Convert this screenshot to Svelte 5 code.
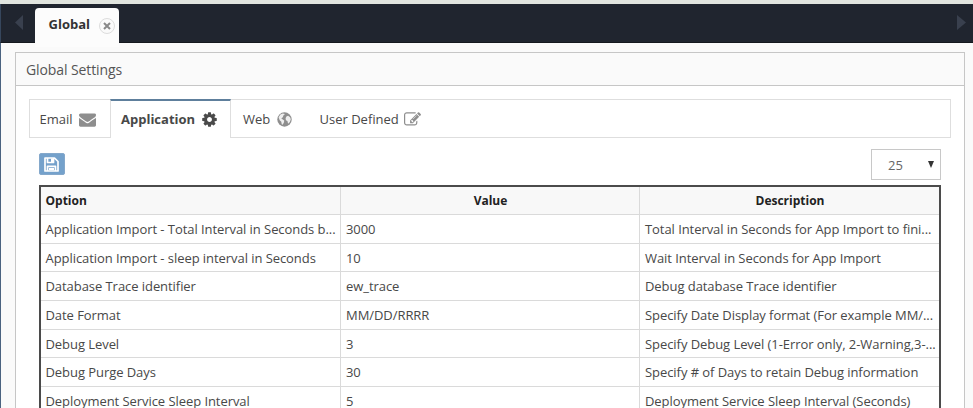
<script>
  const rows = [
    ['Application Import - Total Interval in Seconds b...', '3000', 'Total Interval in Seconds for App Import to fini...'],
    ['Application Import - sleep interval in Seconds', '10', 'Wait Interval in Seconds for App Import'],
    ['Database Trace identifier', 'ew_trace', 'Debug database Trace identifier'],
    ['Date Format', 'MM/DD/RRRR', 'Specify Date Display format (For example MM/...'],
    ['Debug Level', '3', 'Specify Debug Level (1-Error only, 2-Warning,3-...'],
    ['Debug Purge Days', '30', 'Specify # of Days to retain Debug information'],
    ['Deployment Service Sleep Interval', '5', 'Deployment Service Sleep Interval (Seconds)']
  ];
</script>

<div class="page">
  <div class="strip"></div>
  <header>
    <svg class="arrow left" width="8" height="15" viewBox="0 0 8 15"><path d="M8 0v15L0 7.500z" /></svg>
    <div class="doc-tab">
      <span>Global</span>
      <button class="close" aria-label="Close">
        <svg width="8" height="8" viewBox="0 0 8 8"><path d="M1 1l6 6M7 1L1 7" /></svg>
      </button>
    </div>
    <svg class="arrow right" width="9" height="15" viewBox="0 0 9 15"><path d="M0 0v15l9-7.500z" /></svg>
  </header>
  <main>
    <section class="panel">
      <h1>Global Settings</h1>
      <div class="body">
        <nav>
          <div class="tab email"><span>Email</span>
            <svg width="17" height="17" viewBox="0 0 1792 1792"><path d="M1792 710v794q0 66-47 113t-113 47h-1472q-66 0-113-47t-47-113v-794q44 49 101 87 362 246 497 345 57 42 92.500 65.500t94.500 48 110 24.500h2q51 0 110-24.500t94.500-48 92.500-65.500q170-123 498-345 57-39 100-87zm0-294q0 79-49 151t-122 123q-376 261-468 325-10 7-42.500 31t-54 38.500-52 32.500-57.500 27-50 9h-2q-23 0-50-9t-57.500-27-52-32.500-54-38.500-42.500-31q-91-64-262-182.500t-205-142.500q-62-42-117-115.500t-55-136.500q0-78 41.500-130t118.500-52h1472q65 0 112.500 47t47.500 113z" /></svg>
          </div>
          <div class="tab active"><span>Application</span>
            <svg width="17" height="17" viewBox="0 0 1792 1792"><path d="M1152 896q0-106-75-181t-181-75-181 75-75 181 75 181 181 75 181-75 75-181zm512-109v222q0 12-8 23t-20 13l-185 28q-19 54-39 91 35 50 107 138 10 12 10 25t-9 23q-27 37-99 108t-94 71q-12 0-26-9l-138-108q-44 23-91 38-16 136-29 186-7 28-36 28h-222q-14 0-24.500-8.500t-11.500-21.500l-28-184q-49-16-90-37l-141 107q-10 9-25 9-14 0-25-11-126-114-165-168-7-10-7-23 0-12 8-23 15-21 51-66.500t54-70.500q-27-50-41-99l-183-27q-13-2-21-12.500t-8-23.500v-222q0-12 8-23t19-13l186-28q14-46 39-92-40-57-107-138-10-12-10-24 0-10 9-23 26-36 98.500-107.500t94.500-71.500q13 0 26 10l138 107q44-23 91-38 16-136 29-186 7-28 36-28h222q14 0 24.500 8.500t11.500 21.500l28 184q49 16 90 37l142-107q9-9 24-9 13 0 25 10 129 119 165 170 7 8 7 22 0 12-8 23-15 21-51 66.500t-54 70.500q26 50 41 98l183 28q13 2 21 12.500t8 23.500z" /></svg>
          </div>
          <div class="tab web"><span>Web</span>
            <svg width="15" height="15" viewBox="0 0 15 15"><circle cx="7.500" cy="7.500" r="7.200" /><path class="land" d="M1.600 5.200L3.400 2.600 5.800 1.500 8 2.100 6.400 3.400 5.800 5.300 4.300 6.400 5.800 7.400 7.200 8.400 7 10.200 5.700 12.800 4.700 12.200 4.300 9.800 2.700 8.200zM9.400 4.600l1.700-.8 2 1.400.7 2-.9 2.800-1.800 1.700-.7-2.800-1.500-.7-.3-2z" /></svg>
          </div>
          <div class="tab user"><span>User Defined</span>
            <svg width="17" height="17" viewBox="0 0 1792 1792"><path d="M888 1184l116-116-152-152-116 116v56h96v96h56zm440-720q-16-16-33 1l-350 350q-17 17-1 33t33-1l350-350q17-17 1-33zm80 594v190q0 119-84.500 203.500t-203.500 84.500h-832q-119 0-203.500-84.500t-84.500-203.500v-832q0-119 84.500-203.500t203.500-84.500h832q63 0 117 25 15 7 18 23 3 17-9 29l-49 49q-14 14-32 8-23-6-45-6h-832q-66 0-113 47t-47 113v832q0 66 47 113t113 47h832q66 0 113-47t47-113v-126q0-13 9-22l64-64q15-15 35-7t20 29zm-96-738l288 288-672 672h-288v-288zm444 132l-92 92-288-288 92-92q28-28 68-28t68 28l152 152q28 28 28 68t-28 68z" /></svg>
          </div>
        </nav>
        <div class="tools">
          <button class="save" aria-label="Save">
            <svg width="15" height="15" viewBox="0 0 15 15"><path class="frame" d="M1 1h9.500L14 4.500V14H1zM3.500 1v4.500h6V1M3.500 14V9.300h8V14" /><path class="fill" d="M7 1.500h2V5H7zM5 11h5v2.300H5z" /></svg>
          </button>
          <div class="select"><span>25</span>
            <svg width="6" height="7" viewBox="0 0 6 7"><path d="M0 0h6L3 7z" /></svg>
          </div>
        </div>
        <div class="grid">
          <div class="row head"><div>Option</div><div>Value</div><div>Description</div></div>
          {#each rows as row}
            <div class="row">
              {#each row as cell}<div>{cell}</div>{/each}
            </div>
          {/each}
        </div>
      </div>
    </section>
  </main>
</div>

<style>
  .page { box-sizing: border-box; width: 973px; height: 408px; overflow: hidden; display: flex; flex-direction: column; font: 13px "Open Sans", sans-serif; color: #484848; background: #fafafa; }
  .page * { box-sizing: border-box; }
  .strip { height: 4px; background: #e1e5df; flex: none; }
  header { height: 39px; flex: none; background: #20252f; display: flex; align-items: flex-start; padding: 0 7px 0 14px; border-left: 1px solid #36465c; border-bottom: 1px solid #15181e; }
  .arrow { margin-top: 11px; fill: #39404e; }
  .arrow.left { width: 8px; margin-right: 12px; }
  .arrow.right { margin-left: auto; }
  .doc-tab { height: 39px; width: 84px; margin-top: 4px; padding: 0 4px 4px 13.500px; display: flex; align-items: center; background: #fcfcfc; border-radius: 4px 4px 0 0; font-weight: 700; color: #333; flex: none; }
  .doc-tab span { margin-bottom: 3px; }
  .close { width: 16px; height: 16px; margin: 1px 0 0 auto; padding: 0; display: flex; align-items: center; justify-content: center; border: 1px solid #ddd; border-radius: 50%; background: #fafafa; }
  .close path { stroke: #888; stroke-width: 2; }
  main { flex: 1; min-height: 0; padding: 9px 8px 0 14px; border-left: 1px solid #4b6380; }
  .panel { height: 400px; border: 1px solid #c6c6c6; background: #fff; }
  h1 { margin: 0; height: 33px; line-height: 34px; padding-left: 10px; font-size: 14px; letter-spacing: -.1px; font-weight: 400; color: #555; background: #fafafa; border-bottom: 1px solid #c6c6c6; }
  .body { padding: 13px 13px 0 13px; }
  nav { height: 39px; display: flex; border: 1px solid #dedede; }
  .tab { display: flex; align-items: center; padding-left: 9.500px; height: 37px; }
  .tab svg { fill: #8e8e8e; flex: none; }
  .email { width: 80px; }
  .email svg { margin: 1px 0 0 6px; }
  .active { width: 121px; height: 39px; margin-top: -1px; padding: 0 0 1px 10px; border: 1px solid #dedede; border-top: 2px solid #5e7f9c; border-bottom: 0; background: #fff; font-weight: 700; }
  .active svg { fill: #4a4a4a; margin: 1px 0 0 6px; }
  .web { width: 76px; padding-left: 12px; }
  .web svg { margin: 1px 0 0 7px; }
  .web .land { fill: #fff; opacity: .85; }
  .user { padding-left: 12.500px; }
  .user svg { margin: 1px 0 0 5px; }
  .tools { height: 47px; padding: 11px 10px 0 9.500px; display: flex; justify-content: space-between; align-items: flex-start; }
  .save { width: 26px; height: 22px; margin-top: 4px; padding: 0; display: flex; align-items: center; justify-content: center; background: #74a1cb; border: 1px solid #84a8cb; border-radius: 2px; }
  .frame { fill: none; stroke: #fff; stroke-width: 1.700; stroke-linejoin: round; }
  .fill { fill: #fff; }
  .select { width: 70px; height: 31px; padding: 1px 6px 0 16px; display: flex; align-items: center; justify-content: space-between; background: #fff; border: 1px solid #c8c8c8; color: #666; }
  .select svg { fill: #333; margin-top: -2px; }
  .grid { margin: 0 10px; border: 2px solid #4b4b4b; height: 260px; letter-spacing: -.06px; }
  .row { display: grid; grid-template-columns: 300px 299px 1fr; height: 28.700px; }
  .row > div { border-right: 1px solid #dadada; border-bottom: 1px solid #dadada; padding: 0 4px 0 5px; line-height: 29px; white-space: nowrap; overflow: hidden; }
  .row > div:first-child { padding-left: 4.500px; }
  .row > div:last-child { border-right: 0; }
  .row.head { height: 28px; font-size: 12px; font-weight: 700; color: #222; background: #f8f8f8; letter-spacing: 0; }
  .head > div { line-height: 28px; }
  .head > div + div { text-align: center; }
</style>
